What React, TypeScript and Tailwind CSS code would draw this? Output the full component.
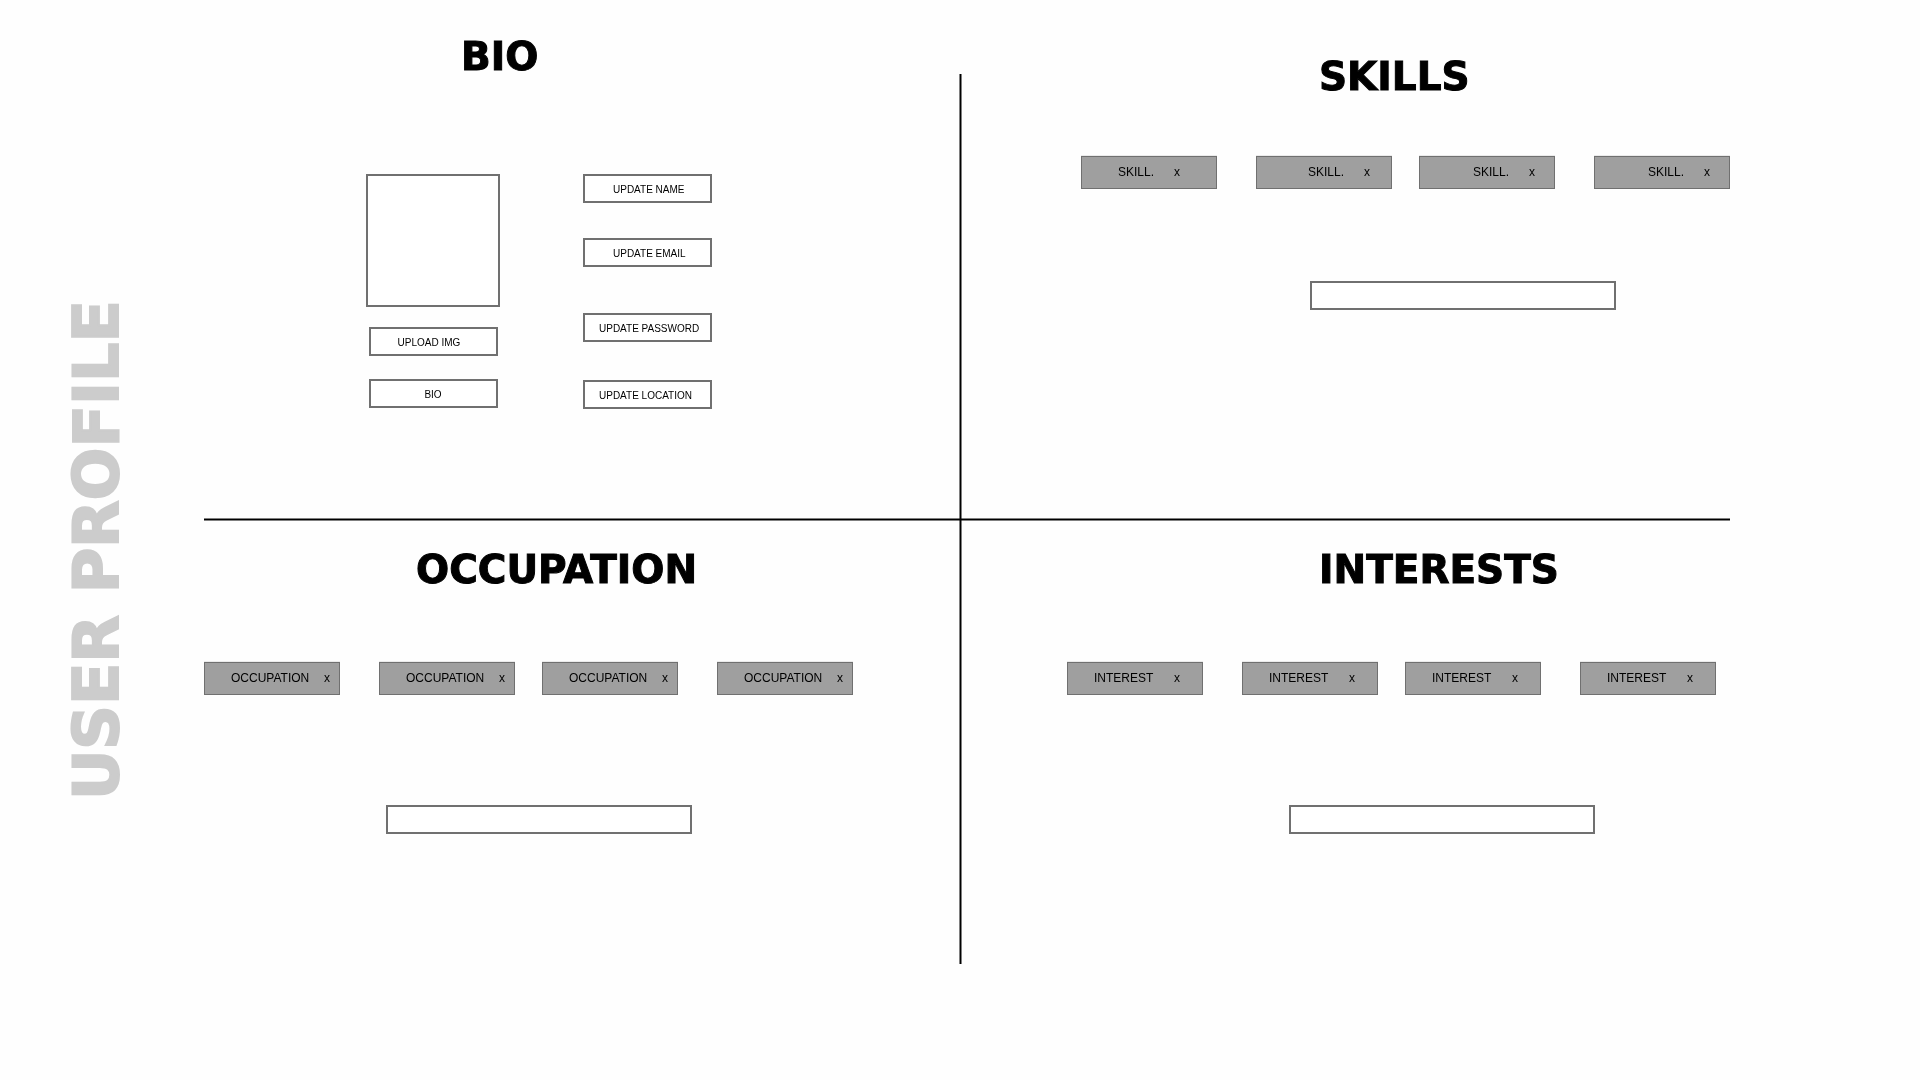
import type { ReactNode } from "react";

const BOX = "border-2 border-[#707070] bg-white";

function Heading({ className, children }: { className: string; children: ReactNode }) {
  return (
    <h2
      className={`font-['DejaVu_Sans',sans-serif] text-[39px] leading-[42px] font-bold [-webkit-text-stroke:1px_#000] ${className}`}
    >
      {children}
    </h2>
  );
}

function ActionButton({ className = "", children }: { className?: string; children: ReactNode }) {
  return (
    <button
      type="button"
      className={`flex h-[29px] w-[129px] items-center pt-0.5 text-[10px] leading-3 whitespace-nowrap ${BOX} ${className}`}
    >
      {children}
    </button>
  );
}

function Chip({ label, className }: { label: string; className: string }) {
  return (
    <li
      className={`flex h-[33px] w-[136px] shrink-0 items-center justify-between border border-[#707070] bg-[#9f9f9f] pb-0.5 text-xs shadow-[0_-1px_0_#ebebeb] ${className}`}
    >
      <span>{label}</span>
      <button type="button" aria-label={`Remove ${label}`}>
        x
      </button>
    </li>
  );
}

function ChipRow({ label, chips, className }: { label: string; chips: string[]; className: string }) {
  return (
    <ul className={`flex ${className}`}>
      <Chip label={label} className={`mr-[39px] ${chips[0]}`} />
      <Chip label={label} className={`mr-[27px] ${chips[1]}`} />
      <Chip label={label} className={`mr-[39px] ${chips[2]}`} />
      <Chip label={label} className={chips[3]} />
    </ul>
  );
}

function AddField({ label, className }: { label: string; className: string }) {
  return (
    <input
      type="text"
      aria-label={label}
      className={`block h-[29px] w-[306px] px-2 text-xs outline-none ${BOX} ${className}`}
    />
  );
}

const OCCUPATION_CHIPS = Array<string>(4).fill("pl-[26px] pr-[9px]");
const INTEREST_CHIPS = Array<string>(4).fill("pl-[26px] pr-[22px]");
const SKILL_CHIPS = [
  "pl-9 pr-9",
  "pl-[51px] pr-[21px]",
  "pl-[53px] pr-[19px]",
  "pl-[53px] pr-[19px]",
];

export default function App() {
  return (
    <main className="flex min-h-screen bg-[#fefefe] pr-[190px] font-['Liberation_Sans',Arial,sans-serif] text-black">
      <header className="flex w-[204px] shrink-0 justify-center pt-[300px] pr-[11px]">
        <h1 className="h-[500px] rotate-180 font-['DejaVu_Sans',sans-serif] text-[62px] leading-[64px] font-bold whitespace-nowrap text-[#cccccc] [-webkit-text-stroke:2px_#ccc] [writing-mode:vertical-rl]">
          USER PROFILE
        </h1>
      </header>

      <div className="grid grow grid-cols-[755fr_3px_768fr] grid-rows-[518px_3px_auto] content-start">
        <section className="col-start-1 row-start-1 pt-9">
          <Heading className="ml-[257px]">BIO</Heading>
          <div className="mt-24 ml-[162px] flex gap-[83px]">
            <div className="flex w-[134px] flex-col items-center">
              <div className={`h-[133px] w-full ${BOX}`} />
              <ActionButton className="mt-5 pl-[27px]">UPLOAD IMG</ActionButton>
              <ActionButton className="mt-[23px] justify-center">BIO</ActionButton>
            </div>
            <div className="flex flex-col">
              <ActionButton className="pl-7">UPDATE NAME</ActionButton>
              <ActionButton className="mt-[35px] pl-7">UPDATE EMAIL</ActionButton>
              <ActionButton className="mt-[46px] pl-[14px]">UPDATE PASSWORD</ActionButton>
              <ActionButton className="mt-[38px] pl-[14px]">UPDATE LOCATION</ActionButton>
            </div>
          </div>
        </section>

        <section className="col-start-3 row-start-1 pt-14">
          <Heading className="ml-[357px]">SKILLS</Heading>
          <ChipRow label="SKILL." chips={SKILL_CHIPS} className="mt-[58px] ml-[119px]" />
          <AddField label="Add a skill" className="mt-[92px] ml-[348px]" />
        </section>

        <div className="col-span-3 col-start-1 row-start-2 border-y border-[#808080] bg-black" />
        <div className="col-start-2 row-span-3 row-start-1 mt-[74px] border-x border-[#808080] bg-black mix-blend-multiply" />

        <section className="col-start-1 row-start-3 pt-7 pb-[130px]">
          <Heading className="ml-[212px]">OCCUPATION</Heading>
          <ChipRow label="OCCUPATION" chips={OCCUPATION_CHIPS} className="mt-[71px]" />
          <AddField label="Add an occupation" className="mt-[110px] ml-[182px]" />
        </section>

        <section className="col-start-3 row-start-3 pt-7 pb-[130px]">
          <Heading className="ml-[357px]">INTERESTS</Heading>
          <ChipRow label="INTEREST" chips={INTEREST_CHIPS} className="mt-[71px] ml-[105px]" />
          <AddField label="Add an interest" className="mt-[110px] ml-[327px]" />
        </section>
      </div>
    </main>
  );
}
